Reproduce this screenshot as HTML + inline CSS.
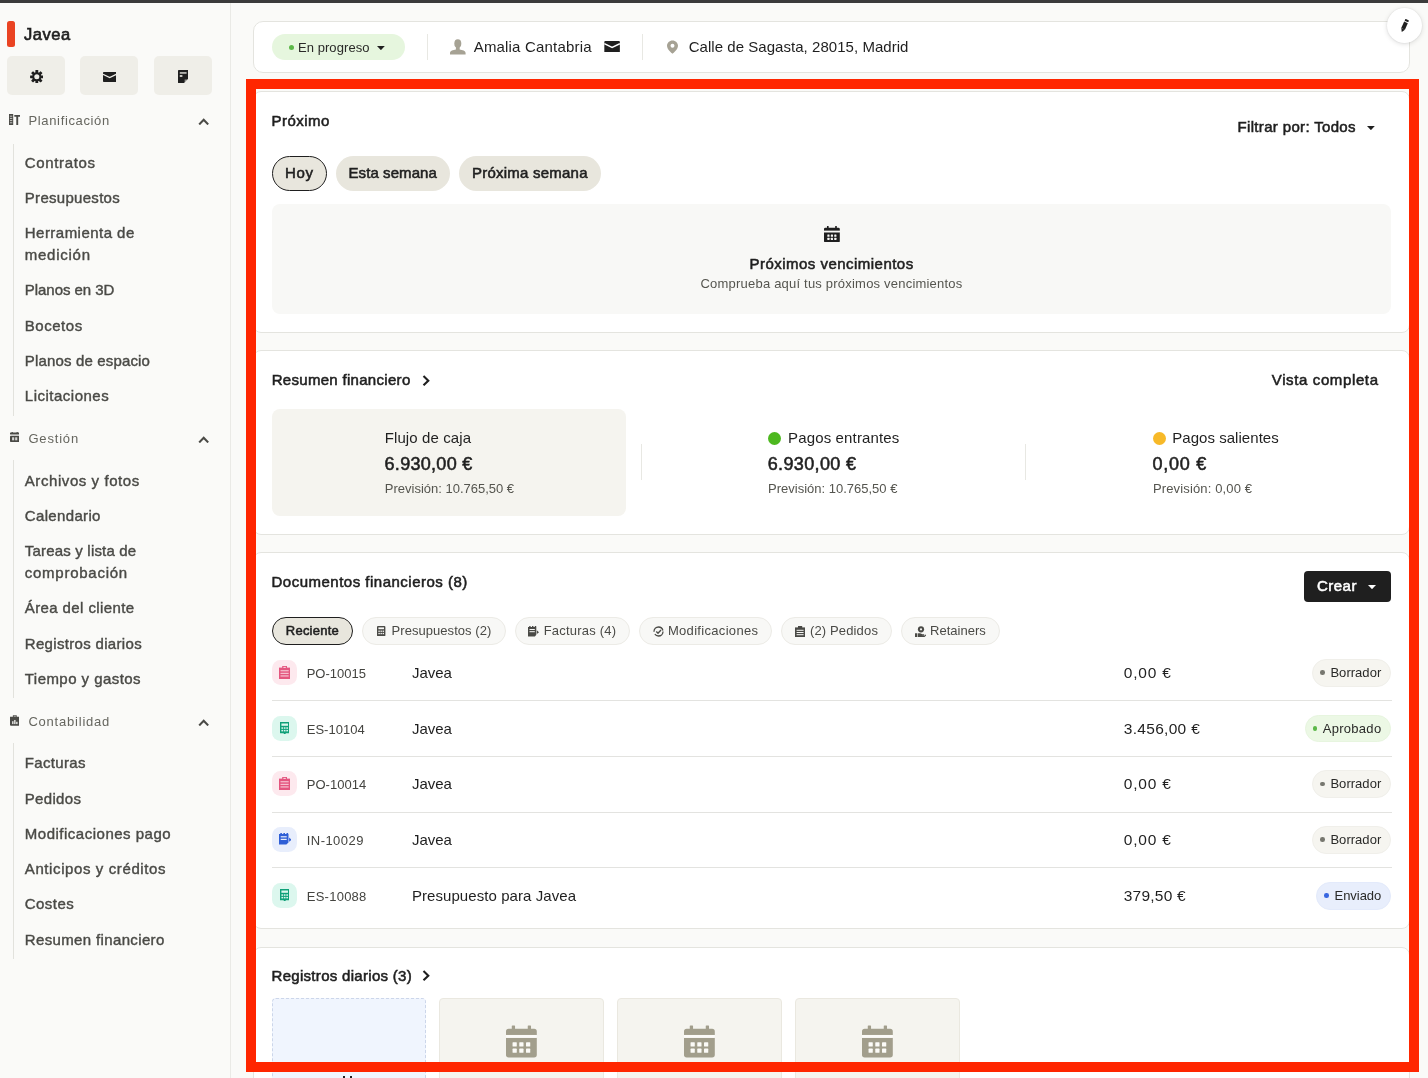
<!DOCTYPE html>
<html lang="es">
<head>
<meta charset="utf-8">
<title>Javea</title>
<style>
*{box-sizing:border-box;margin:0;padding:0}
html,body{width:1428px;height:1078px;overflow:hidden;background:#fafaf8;font-family:"Liberation Sans",sans-serif;color:#1f1f1f}
div,svg,i,span{position:absolute;display:block}
.t{white-space:nowrap}
.card{left:253px;width:1157px;background:#fff;border:1px solid #e4e4df;border-radius:8px}
.sep{width:1px;background:#e8e8e3}
.pill{top:156px;height:35px;border-radius:18px;background:#e8e6dd}
.tab{top:617.2px;height:27.4px;border-radius:14px;background:#f8f8f6;border:1px solid #ecebe6}
.rowline{left:272px;width:1120px;height:1px;background:#e3e3e0}
.ico{left:272px;width:25px;height:25px;border-radius:8.5px}
.badge{height:27.8px;border-radius:14px}
.badge i{width:4.6px;height:4.6px;border-radius:50%}
.tile{top:998px;height:90px;background:#f5f4ef;border:1px solid #eae8e0;border-radius:4px}
.sbtn{top:56px;width:58px;height:38.5px;background:#efeee8;border-radius:5px}
.vline{left:13px;width:1px;background:#e2e2dd}
</style>
</head>
<body>
<div id="w" style="left:0;top:0;width:1428px;height:1078px;will-change:transform">
<div style="left:0;top:0;width:1428px;height:3px;background:#3b3b3b"></div>
<div style="left:0;top:3px;width:231px;height:1075px;background:#fafaf8;border-right:1px solid #eaeae6"></div>
<div style="left:7.1px;top:20.8px;width:8px;height:26px;border-radius:2.5px;background:#ea4322"></div>
<div class="t" style="left:24.01px;top:24px;font-size:16.5px;line-height:20px;color:#1f1f1f;letter-spacing:0.553px;-webkit-text-stroke:0.65px #1f1f1f;">Javea</div>
<div class="sbtn" style="left:7px"></div>
<div class="sbtn" style="left:80.3px"></div>
<div class="sbtn" style="left:154px"></div>
<svg style="left:29.8px;top:69.7px" width="13.6" height="13.6" viewBox="-7 -7 14 14"><g fill="#1f1f1f"><circle r="4.7"/><rect x="-1.45" y="-6.9" width="2.9" height="13.8" rx=".5"/><rect x="-1.45" y="-6.9" width="2.9" height="13.8" rx=".5" transform="rotate(45)"/><rect x="-1.45" y="-6.9" width="2.9" height="13.8" rx=".5" transform="rotate(90)"/><rect x="-1.45" y="-6.9" width="2.9" height="13.8" rx=".5" transform="rotate(135)"/></g><circle r="2.6" fill="#efeee8"/></svg>
<svg style="left:102.9px;top:71.6px" width="13.4" height="10" viewBox="0 0 13.4 10"><rect width="13.4" height="10" rx=".8" fill="#1f1f1f"/><path d="M0 2.3 L6.7 5.6 L13.4 2.3" fill="none" stroke="#efeee8" stroke-width="1.25"/></svg>
<svg style="left:177.7px;top:69.7px" width="10.4" height="13.2" viewBox="0 0 10.4 13.2"><path d="M.8 0h8.8a.8.8 0 0 1 .8.8V8.6L5.9 13.2H.8a.8.8 0 0 1-.8-.8V.8A.8.8 0 0 1 .8 0z" fill="#1f1f1f"/><rect x="1.8" y="2.3" width="6.8" height="1.3" fill="#efeee8"/><rect x="1.8" y="5.2" width="2.6" height="1.6" fill="#efeee8"/><path d="M6.6 13V9.6h3.6z" fill="#efeee8" opacity=".55"/></svg>
<svg style="left:8.7px;top:114.2px" width="11.2" height="11" viewBox="0 0 11.2 11"><path d="M0 0h4.2v11H0z" fill="#4a4a46"/><path d="M.9 2.2h2.4M.9 4.4h2.4M.9 6.6h2.4M.9 8.8h2.4" stroke="#fafaf8" stroke-width=".7"/><path d="M5.3 .9h5.9v1.9H5.3z M7.3 2.8h1.9V11H7.3z" fill="#4a4a46"/></svg>
<div class="t" style="left:28.52px;top:113px;font-size:13px;line-height:16px;color:#66665f;letter-spacing:0.644px;">Planificación</div>
<svg style="left:197.6px;top:117.8px" width="11.4" height="7.6" viewBox="0 0 11.4 7.6"><path d="M1.2 6.4 L5.7 1.8 L10.2 6.4" fill="none" stroke="#4a4a46" stroke-width="2.1"/></svg>
<svg style="left:9.7px;top:432.100px" width="9.400" height="10" viewBox="0 0 9.400 10"><g fill="#4a4a46"><rect x="1.600" y="0" width="1.200" height="1.400"/><rect x="6.600" y="0" width="1.200" height="1.400"/><rect x="0" y=".5" width="9.400" height="2.100" rx=".7"/><rect x="0" y="3.700" width="9.400" height="6.300" rx=".7"/></g><g fill="#fafaf8" opacity=".8"><rect x="2.100" y="5.300" width="2.100" height="3"/><rect x="5.200" y="5.300" width="2.100" height="3"/></g></svg>
<div class="t" style="left:28.42px;top:431px;font-size:13px;line-height:16px;color:#66665f;letter-spacing:0.821px;">Gestión</div>
<svg style="left:197.6px;top:435.8px" width="11.4" height="7.6" viewBox="0 0 11.4 7.6"><path d="M1.2 6.4 L5.7 1.8 L10.2 6.4" fill="none" stroke="#4a4a46" stroke-width="2.1"/></svg>
<svg style="left:9.800px;top:714.900px" width="9.600" height="10.900" viewBox="0 0 10 11"><path d="M0 1.600h10V10a1 1 0 0 1-1 1H1a1 1 0 0 1-1-1z M3 0h4v2H3z" fill="#4a4a46"/><rect x="3.900" y=".7" width="2.200" height=".8" fill="#fafaf8" opacity=".7"/><rect x="2.300" y="6.300" width="1.300" height="3" fill="#fafaf8"/><rect x="4.400" y="5" width="1.300" height="4.300" fill="#fafaf8"/><rect x="6.500" y="6.900" width="1.300" height="2.400" fill="#fafaf8"/></svg>
<div class="t" style="left:28.42px;top:714px;font-size:13px;line-height:16px;color:#66665f;letter-spacing:0.788px;">Contabilidad</div>
<svg style="left:197.6px;top:718.6px" width="11.4" height="7.6" viewBox="0 0 11.4 7.6"><path d="M1.2 6.4 L5.7 1.8 L10.2 6.4" fill="none" stroke="#4a4a46" stroke-width="2.1"/></svg>
<div class="vline" style="top:144px;height:271.5px"></div>
<div class="vline" style="top:460px;height:238px"></div>
<div class="vline" style="top:743px;height:216px"></div>
<div class="t" style="left:24.80px;top:152px;font-size:15px;line-height:22px;color:#4a4a46;letter-spacing:0.655px;-webkit-text-stroke:0.4px #4a4a46;">Contratos</div>
<div class="t" style="left:24.80px;top:187px;font-size:15px;line-height:22px;color:#4a4a46;letter-spacing:0.294px;-webkit-text-stroke:0.4px #4a4a46;">Presupuestos</div>
<div class="t" style="left:24.80px;top:222px;font-size:15px;line-height:22px;color:#4a4a46;letter-spacing:0.468px;-webkit-text-stroke:0.4px #4a4a46;">Herramienta de</div>
<div class="t" style="left:24.80px;top:244px;font-size:15px;line-height:22px;color:#4a4a46;letter-spacing:0.743px;-webkit-text-stroke:0.4px #4a4a46;">medición</div>
<div class="t" style="left:24.80px;top:279px;font-size:15px;line-height:22px;color:#4a4a46;letter-spacing:-0.040px;-webkit-text-stroke:0.4px #4a4a46;">Planos en 3D</div>
<div class="t" style="left:24.80px;top:315px;font-size:15px;line-height:22px;color:#4a4a46;letter-spacing:0.523px;-webkit-text-stroke:0.4px #4a4a46;">Bocetos</div>
<div class="t" style="left:24.80px;top:350px;font-size:15px;line-height:22px;color:#4a4a46;letter-spacing:0.158px;-webkit-text-stroke:0.4px #4a4a46;">Planos de espacio</div>
<div class="t" style="left:24.80px;top:385px;font-size:15px;line-height:22px;color:#4a4a46;letter-spacing:0.498px;-webkit-text-stroke:0.4px #4a4a46;">Licitaciones</div>
<div class="t" style="left:24.80px;top:470px;font-size:15px;line-height:22px;color:#4a4a46;letter-spacing:0.570px;-webkit-text-stroke:0.4px #4a4a46;">Archivos y fotos</div>
<div class="t" style="left:24.80px;top:505px;font-size:15px;line-height:22px;color:#4a4a46;letter-spacing:0.342px;-webkit-text-stroke:0.4px #4a4a46;">Calendario</div>
<div class="t" style="left:24.80px;top:540px;font-size:15px;line-height:22px;color:#4a4a46;letter-spacing:0.189px;-webkit-text-stroke:0.4px #4a4a46;">Tareas y lista de</div>
<div class="t" style="left:24.80px;top:562px;font-size:15px;line-height:22px;color:#4a4a46;letter-spacing:0.737px;-webkit-text-stroke:0.4px #4a4a46;">comprobación</div>
<div class="t" style="left:24.80px;top:597px;font-size:15px;line-height:22px;color:#4a4a46;letter-spacing:0.394px;-webkit-text-stroke:0.4px #4a4a46;">Área del cliente</div>
<div class="t" style="left:24.80px;top:633px;font-size:15px;line-height:22px;color:#4a4a46;letter-spacing:0.321px;-webkit-text-stroke:0.4px #4a4a46;">Registros diarios</div>
<div class="t" style="left:24.80px;top:668px;font-size:15px;line-height:22px;color:#4a4a46;letter-spacing:0.449px;-webkit-text-stroke:0.4px #4a4a46;">Tiempo y gastos</div>
<div class="t" style="left:24.80px;top:752px;font-size:15px;line-height:22px;color:#4a4a46;letter-spacing:0.326px;-webkit-text-stroke:0.4px #4a4a46;">Facturas</div>
<div class="t" style="left:24.80px;top:788px;font-size:15px;line-height:22px;color:#4a4a46;letter-spacing:0.322px;-webkit-text-stroke:0.4px #4a4a46;">Pedidos</div>
<div class="t" style="left:24.80px;top:823px;font-size:15px;line-height:22px;color:#4a4a46;letter-spacing:0.505px;-webkit-text-stroke:0.4px #4a4a46;">Modificaciones pago</div>
<div class="t" style="left:24.80px;top:858px;font-size:15px;line-height:22px;color:#4a4a46;letter-spacing:0.604px;-webkit-text-stroke:0.4px #4a4a46;">Anticipos y créditos</div>
<div class="t" style="left:24.80px;top:893px;font-size:15px;line-height:22px;color:#4a4a46;letter-spacing:0.439px;-webkit-text-stroke:0.4px #4a4a46;">Costes</div>
<div class="t" style="left:24.80px;top:929px;font-size:15px;line-height:22px;color:#4a4a46;letter-spacing:0.360px;-webkit-text-stroke:0.4px #4a4a46;">Resumen financiero</div>
<div style="left:253px;top:21px;width:1157px;height:52px;background:#fff;border:1px solid #e4e4df;border-radius:10px"></div>
<div style="left:272px;top:34.3px;width:133px;height:26.2px;border-radius:13.1px;background:#e6f6de"></div>
<div style="left:289px;top:45px;width:5px;height:5px;border-radius:50%;background:#5cb848"></div>
<div class="t" style="left:297.92px;top:40px;font-size:13px;line-height:16px;color:#2a2a28;letter-spacing:0.078px;">En progreso</div>
<svg style="left:376.8px;top:45.9px" width="7.8" height="4.2" viewBox="0 0 8 4.2"><path d="M0 0h8L4 4.2z" fill="#1f1f1f"/></svg>
<div class="sep" style="left:427px;top:34px;height:26px"></div>
<div class="sep" style="left:642px;top:34px;height:26px"></div>
<svg style="left:450px;top:39.4px" width="15.6" height="15.6" viewBox="0 0 15.6 15.6"><g fill="#a6a294"><ellipse cx="7.8" cy="4.6" rx="3.5" ry="4.4"/><path d="M5.9 7.5h3.8v3.1c2.6.5 5.9 1.300 5.9 3.4v1.600H0v-1.600c0-2.100 3.300-2.900 5.900-3.400z"/></g></svg>
<div class="t" style="left:473.70px;top:37px;font-size:15px;line-height:20px;color:#1f1f1f;letter-spacing:0.183px;">Amalia Cantabria</div>
<svg style="left:603.8px;top:40.9px" width="16.2" height="11.6" viewBox="0 0 13.4 10"><rect width="13.4" height="10" rx=".8" fill="#1f1f1f"/><path d="M0 2.3 L6.7 5.6 L13.4 2.3" fill="none" stroke="#ffffff" stroke-width="1.25"/></svg>
<svg style="left:667.4px;top:39.6px" width="11" height="14.2" viewBox="0 0 11.8 14.4"><path d="M5.9 0C2.600 0 0 2.600 0 5.800c0 3.900 4.800 7.600 5.900 8.600 1.100-1 5.900-4.700 5.900-8.600C11.800 2.600 9.200 0 5.900 0z" fill="#a6a294"/><circle cx="5.9" cy="5.700" r="2.100" fill="#fff"/></svg>
<div class="t" style="left:688.70px;top:37px;font-size:15px;line-height:20px;color:#1f1f1f;letter-spacing:0.043px;">Calle de Sagasta, 28015, Madrid</div>
<div style="left:1386.8px;top:8.2px;width:35px;height:35px;border-radius:50%;background:#fff;box-shadow:0 1px 5px rgba(0,0,0,.13),0 0 2px rgba(0,0,0,.10);z-index:60"></div>
<svg style="left:1398.5px;top:18.5px;z-index:61" width="11" height="13.5" viewBox="0 0 11 13.5"><g transform="rotate(24 5.5 6.75)" fill="#1f1f1f"><rect x="3.5" y="3.1" width="4" height="7.1"/><path d="M3.5 10.200h4L5.500 13.500z"/><rect x="3.500" y=".1" width="4" height="2" rx=".6"/></g></svg>
<div class="card" style="top:91px;height:242px"></div>
<div class="card" style="top:350px;height:185px"></div>
<div class="card" style="top:552px;height:377px"></div>
<div class="card" style="top:947px;height:160px"></div>
<div class="t" style="left:271.50px;top:111px;font-size:15px;line-height:20px;color:#1f1f1f;letter-spacing:0.475px;-webkit-text-stroke:0.55px #1f1f1f;">Próximo</div>
<div class="t" style="left:1237.50px;top:117px;font-size:15px;line-height:20px;color:#1f1f1f;letter-spacing:0.339px;-webkit-text-stroke:0.55px #1f1f1f;">Filtrar por: Todos</div>
<svg style="left:1367.4px;top:125.6px" width="7.8" height="4.2" viewBox="0 0 8 4.2"><path d="M0 0h8L4 4.2z" fill="#1f1f1f"/></svg>
<div class="pill" style="left:272px;width:55px;border:1.3px solid #1f1f1f"></div>
<div class="pill" style="left:336px;width:114px"></div>
<div class="pill" style="left:459px;width:142px"></div>
<div class="t" style="left:285.10px;top:163px;font-size:15px;line-height:20px;color:#1f1f1f;letter-spacing:0.650px;-webkit-text-stroke:0.55px #1f1f1f;">Hoy</div>
<div class="t" style="left:348.50px;top:163px;font-size:15px;line-height:20px;color:#1f1f1f;letter-spacing:0.081px;-webkit-text-stroke:0.55px #1f1f1f;">Esta semana</div>
<div class="t" style="left:472.00px;top:163px;font-size:15px;line-height:20px;color:#1f1f1f;letter-spacing:0.226px;-webkit-text-stroke:0.55px #1f1f1f;">Próxima semana</div>
<div style="left:272px;top:204px;width:1119px;height:109.5px;border-radius:8px;background:#f8f8f6"></div>
<svg style="left:824px;top:226px" width="15.8" height="16.4" viewBox="0 0 16 16.6"><g fill="#1f1f1f"><rect x="3" y="0" width="1.700" height="3" rx=".3"/><rect x="11.300" y="0" width="1.700" height="3" rx=".3"/><path d="M1.400 1.700h13.200a1.400 1.400 0 0 1 1.400 1.400v1.800H0V3.100a1.400 1.400 0 0 1 1.400-1.400z"/><path d="M0 6.400h16v8.800a1.400 1.400 0 0 1-1.400 1.400H1.400A1.400 1.400 0 0 1 0 15.200z"/></g><g fill="#f8f8f6"><rect x="0" y="4.900" width="16" height="1.500"/><rect x="3.400" y="8.700" width="2.200" height="2.200" rx=".3"/><rect x="6.900" y="8.700" width="2.200" height="2.200" rx=".3"/><rect x="10.400" y="8.700" width="2.200" height="2.200" rx=".3"/><rect x="3.400" y="12" width="2.200" height="2.200" rx=".3"/><rect x="6.900" y="12" width="2.200" height="2.200" rx=".3"/><rect x="10.400" y="12" width="2.200" height="2.200" rx=".3"/></g></svg>
<div class="t" style="left:749.50px;top:254px;font-size:15px;line-height:20px;color:#1f1f1f;letter-spacing:0.472px;-webkit-text-stroke:0.55px #1f1f1f;">Próximos vencimientos</div>
<div class="t" style="left:700.52px;top:276px;font-size:13px;line-height:16px;color:#55554f;letter-spacing:0.208px;">Comprueba aquí tus próximos vencimientos</div>
<div class="t" style="left:271.70px;top:370px;font-size:15px;line-height:20px;color:#1f1f1f;letter-spacing:0.303px;-webkit-text-stroke:0.55px #1f1f1f;">Resumen financiero</div>
<svg style="left:422px;top:374.6px" width="8.4" height="11.4" viewBox="0 0 8.4 11.4"><path d="M1.500 1.100 L6.300 5.700 L1.500 10.300" fill="none" stroke="#1f1f1f" stroke-width="2.100"/></svg>
<div class="t" style="left:1271.80px;top:370px;font-size:15px;line-height:20px;color:#1f1f1f;letter-spacing:0.622px;-webkit-text-stroke:0.55px #1f1f1f;">Vista completa</div>
<div style="left:272px;top:409.2px;width:354.4px;height:107px;border-radius:8px;background:#f5f4ef"></div>
<div class="t" style="left:384.70px;top:428px;font-size:15px;line-height:20px;color:#1f1f1f;letter-spacing:0.108px;">Flujo de caja</div>
<div class="t" style="left:384.52px;top:454px;font-size:18px;line-height:20px;color:#1f1f1f;letter-spacing:0.301px;-webkit-text-stroke:0.55px #1f1f1f;">6.930,00 €</div>
<div class="t" style="left:384.82px;top:481px;font-size:13px;line-height:16px;color:#55554f;letter-spacing:-0.006px;">Previsión: 10.765,50 €</div>
<div class="sep" style="left:641px;top:444px;height:36px"></div>
<div class="sep" style="left:1025px;top:444px;height:36px"></div>
<div style="left:767.8px;top:431.8px;width:13.4px;height:13.4px;border-radius:50%;background:#4db81f"></div>
<div class="t" style="left:788.00px;top:428px;font-size:15px;line-height:20px;color:#1f1f1f;letter-spacing:0.149px;">Pagos entrantes</div>
<div class="t" style="left:767.72px;top:454px;font-size:18px;line-height:20px;color:#1f1f1f;letter-spacing:0.364px;-webkit-text-stroke:0.55px #1f1f1f;">6.930,00 €</div>
<div class="t" style="left:768.02px;top:481px;font-size:13px;line-height:16px;color:#55554f;letter-spacing:-0.001px;">Previsión: 10.765,50 €</div>
<div style="left:1153px;top:431.8px;width:13.4px;height:13.4px;border-radius:50%;background:#f7b928"></div>
<div class="t" style="left:1172.20px;top:428px;font-size:15px;line-height:20px;color:#1f1f1f;letter-spacing:0.048px;">Pagos salientes</div>
<div class="t" style="left:1152.62px;top:454px;font-size:18px;line-height:20px;color:#1f1f1f;letter-spacing:0.726px;-webkit-text-stroke:0.55px #1f1f1f;">0,00 €</div>
<div class="t" style="left:1152.92px;top:481px;font-size:13px;line-height:16px;color:#55554f;letter-spacing:0.146px;">Previsión: 0,00 €</div>
<div class="t" style="left:271.50px;top:572px;font-size:15px;line-height:20px;color:#1f1f1f;letter-spacing:0.497px;-webkit-text-stroke:0.55px #1f1f1f;">Documentos financieros (8)</div>
<div style="left:1304px;top:571.2px;width:87px;height:30.4px;border-radius:4px;background:#1f1f1f"></div>
<div class="t" style="left:1317.10px;top:576px;font-size:15px;line-height:20px;color:#fff;letter-spacing:0.443px;-webkit-text-stroke:0.55px #fff;">Crear</div>
<svg style="left:1367.6px;top:585.2px" width="8" height="4.2" viewBox="0 0 8 4.2"><path d="M0 0h8L4 4.2z" fill="#fff"/></svg>
<div class="tab" style="left:272px;width:81px;background:#e8e6dd;border:1.3px solid #1f1f1f"></div>
<div class="t" style="left:285.82px;top:623px;font-size:13px;line-height:16px;color:#1f1f1f;letter-spacing:0.231px;-webkit-text-stroke:0.55px #1f1f1f;">Reciente</div>
<div class="tab" style="left:362.2px;width:143.8px"></div>
<div class="t" style="left:391.52px;top:623px;font-size:13px;line-height:16px;color:#4a4a46;letter-spacing:0.055px;">Presupuestos (2)</div>
<div class="tab" style="left:515.2px;width:114.8px"></div>
<div class="t" style="left:543.72px;top:623px;font-size:13px;line-height:16px;color:#4a4a46;letter-spacing:0.206px;">Facturas (4)</div>
<div class="tab" style="left:639.4px;width:132.6px"></div>
<div class="t" style="left:667.92px;top:623px;font-size:13px;line-height:16px;color:#4a4a46;letter-spacing:0.315px;">Modificaciones</div>
<div class="tab" style="left:781px;width:111.2px"></div>
<div class="t" style="left:809.92px;top:623px;font-size:13px;line-height:16px;color:#4a4a46;letter-spacing:0.149px;">(2) Pedidos</div>
<div class="tab" style="left:901.2px;width:98.5px"></div>
<div class="t" style="left:930.12px;top:623px;font-size:13px;line-height:16px;color:#4a4a46;letter-spacing:0.000px;">Retainers</div>
<svg style="left:377.2px;top:626.2px" width="8.4" height="10.2" viewBox="0 0 8.4 10.2"><rect width="8.4" height="10.2" rx="1" fill="#4a4a46"/><rect x="1.4" y="1.4" width="5.6" height="1.8" fill="#f8f8f6"/><g fill="#f8f8f6"><rect x="1.4" y="4.6" width="1.4" height="1.3"/><rect x="3.5" y="4.600" width="1.400" height="1.300"/><rect x="5.600" y="4.600" width="1.400" height="1.300"/><rect x="1.400" y="6.900" width="1.400" height="1.300"/><rect x="3.500" y="6.900" width="1.400" height="1.300"/><rect x="5.600" y="6.900" width="1.400" height="1.300"/></g></svg>
<svg style="left:528.4px;top:626px" width="11" height="10.6" viewBox="0 0 11 10.6"><path d="M0 1h1.200V0h1.400v1h1.400V0h1.400v1h1.400V0h1.400v1H8.300v7.800L6.900 10.600H0z" fill="#4a4a46"/><rect x="1.500" y="3" width="5.300" height="1" fill="#f8f8f6"/><rect x="1.500" y="5.200" width="5.300" height="1" fill="#f8f8f6"/><path d="M8.800 4.300l2.200 1.900-2.200 1.900z" fill="#4a4a46"/></svg>
<svg style="left:653px;top:626px" width="11" height="11" viewBox="0 0 11 11"><circle cx="5.500" cy="5.500" r="4.500" fill="none" stroke="#4a4a46" stroke-width="1.300" stroke-dasharray="11 2.500 13 2"/><path d="M3.300 5.600l1.700 1.700 3-3.200" fill="none" stroke="#4a4a46" stroke-width="1.400"/></svg>
<svg style="left:795px;top:625.6px" width="10.200" height="11.400" viewBox="0 0 10.200 11.400"><path d="M0 1.400h10.200v10H0z" fill="#4a4a46"/><rect x="3" y="0" width="4.200" height="2.400" fill="#4a4a46"/><g fill="#f8f8f6"><rect x="1.600" y="3.800" width="7" height="1"/><rect x="1.600" y="6" width="7" height="1"/><rect x="1.600" y="8.200" width="7" height="1"/></g></svg>
<svg style="left:915px;top:625.6px" width="11" height="11.400" viewBox="0 0 11 11.400"><circle cx="6" cy="3.300" r="3.100" fill="#4a4a46"/><circle cx="6" cy="3.300" r="1.100" fill="#f8f8f6"/><path d="M0 7.200h2.200v4.200H0z M2.800 7.600c1.800-.8 3.200-.2 4.400.6h1.600c.7 0 .7 1.100 0 1.100H6l3.800.2 1.200-1.200v1.400l-2 1.700H2.800z" fill="#4a4a46"/></svg>
<div class="ico" style="top:660.0px;background:#fde9ee"></div>
<svg style="left:279px;top:665.8px" width="11.2" height="13" viewBox="0 0 11.2 13"><path d="M0 1.600h11.200V13H0z" fill="#e4567f"/><rect x="3.200" y="0" width="4.800" height="2.600" fill="#e4567f"/><rect x="4.400" y=".9" width="2.400" height=".9" fill="#fde9ee"/><g fill="#fde9ee" opacity=".8"><rect x="1.500" y="4.200" width="8.200" height="1.100"/><rect x="1.500" y="6.800" width="8.200" height="1.100"/><rect x="1.500" y="9.400" width="8.200" height="1.100"/></g></svg>
<div class="t" style="left:306.72px;top:666px;font-size:13px;line-height:16px;color:#444440;letter-spacing:-0.016px;">PO-10015</div>
<div class="t" style="left:411.90px;top:663px;font-size:15px;line-height:20px;color:#1f1f1f;letter-spacing:-0.006px;">Javea</div>
<div class="t" style="left:1123.77px;top:663px;font-size:15.5px;line-height:20px;color:#1f1f1f;letter-spacing:0.826px;">0,00 €</div>
<div class="badge" style="left:1312px;top:659.0px;width:79px;background:#f6f5f0;border:1px solid #f0efea"><i style="left:7px;top:10.300px;background:#77776f"></i></div>
<div class="t" style="left:1330.42px;top:665px;font-size:13px;line-height:16px;color:#2a2a28;letter-spacing:0.035px;">Borrador</div>
<div class="ico" style="top:715.7px;background:#dcf7ee"></div>
<svg style="left:280px;top:721.7px" width="9.400" height="12.600" viewBox="0 0 9.400 12.600"><path d="M0 0h9.400v11.300H6l-1.300 1.300L3.400 11.300H0z" fill="#10a079"/><g fill="#dcf7ee"><rect x="1.400" y="1.500" width="6.600" height="2.300"/><rect x="1.400" y="5.300" width="1.700" height="1.500"/><rect x="3.850" y="5.300" width="1.700" height="1.500"/><rect x="6.300" y="5.300" width="1.700" height="1.500"/><rect x="1.400" y="7.900" width="1.700" height="1.500"/><rect x="3.850" y="7.900" width="1.700" height="1.500"/><rect x="6.300" y="7.900" width="1.700" height="1.500"/></g></svg>
<div class="t" style="left:306.72px;top:722px;font-size:13px;line-height:16px;color:#444440;letter-spacing:0.029px;">ES-10104</div>
<div class="t" style="left:411.90px;top:719px;font-size:15px;line-height:20px;color:#1f1f1f;letter-spacing:-0.006px;">Javea</div>
<div class="t" style="left:1123.77px;top:719px;font-size:15.5px;line-height:20px;color:#1f1f1f;letter-spacing:0.303px;">3.456,00 €</div>
<div class="badge" style="left:1304.5px;top:714.7px;width:86.500px;background:#ecf8e5;border:1px solid #e7f5df"><i style="left:7.200px;top:10.300px;background:#5cb848"></i></div>
<div class="t" style="left:1322.72px;top:721px;font-size:13px;line-height:16px;color:#2a2a28;letter-spacing:0.288px;">Aprobado</div>
<div class="ico" style="top:771.4px;background:#fde9ee"></div>
<svg style="left:279px;top:777.1999999999999px" width="11.2" height="13" viewBox="0 0 11.2 13"><path d="M0 1.600h11.200V13H0z" fill="#e4567f"/><rect x="3.200" y="0" width="4.800" height="2.600" fill="#e4567f"/><rect x="4.400" y=".9" width="2.400" height=".9" fill="#fde9ee"/><g fill="#fde9ee" opacity=".8"><rect x="1.500" y="4.200" width="8.200" height="1.100"/><rect x="1.500" y="6.800" width="8.200" height="1.100"/><rect x="1.500" y="9.400" width="8.200" height="1.100"/></g></svg>
<div class="t" style="left:306.72px;top:777px;font-size:13px;line-height:16px;color:#444440;letter-spacing:0.024px;">PO-10014</div>
<div class="t" style="left:411.90px;top:774px;font-size:15px;line-height:20px;color:#1f1f1f;letter-spacing:-0.006px;">Javea</div>
<div class="t" style="left:1123.77px;top:774px;font-size:15.5px;line-height:20px;color:#1f1f1f;letter-spacing:0.826px;">0,00 €</div>
<div class="badge" style="left:1312px;top:770.4px;width:79px;background:#f6f5f0;border:1px solid #f0efea"><i style="left:7px;top:10.300px;background:#77776f"></i></div>
<div class="t" style="left:1330.42px;top:776px;font-size:13px;line-height:16px;color:#2a2a28;letter-spacing:0.035px;">Borrador</div>
<div class="ico" style="top:827.1px;background:#e8eefc"></div>
<svg style="left:278.600px;top:833.3000000000001px" width="12.600" height="11.600" viewBox="0 0 12.600 11.600"><path d="M0 1h1.300V0h1.600v1h1.500V0h1.600v1h1.500V0h1.600v1h.4v8.400L7.400 11.600H0z" fill="#2f5fd6"/><g fill="#e8eefc"><rect x="1.700" y="3.200" width="6" height="1.200"/><rect x="1.700" y="5.800" width="6" height="1.200"/></g><path d="M10.100 4.600l2.500 2.100-2.500 2.100z" fill="#2f5fd6"/></svg>
<div class="t" style="left:306.72px;top:833px;font-size:13px;line-height:16px;color:#444440;letter-spacing:0.461px;">IN-10029</div>
<div class="t" style="left:411.90px;top:830px;font-size:15px;line-height:20px;color:#1f1f1f;letter-spacing:-0.006px;">Javea</div>
<div class="t" style="left:1123.77px;top:830px;font-size:15.5px;line-height:20px;color:#1f1f1f;letter-spacing:0.826px;">0,00 €</div>
<div class="badge" style="left:1312px;top:826.1px;width:79px;background:#f6f5f0;border:1px solid #f0efea"><i style="left:7px;top:10.300px;background:#77776f"></i></div>
<div class="t" style="left:1330.42px;top:832px;font-size:13px;line-height:16px;color:#2a2a28;letter-spacing:0.035px;">Borrador</div>
<div class="ico" style="top:882.8000000000001px;background:#dcf7ee"></div>
<svg style="left:280px;top:888.8000000000001px" width="9.400" height="12.600" viewBox="0 0 9.400 12.600"><path d="M0 0h9.400v11.300H6l-1.300 1.300L3.400 11.300H0z" fill="#10a079"/><g fill="#dcf7ee"><rect x="1.400" y="1.500" width="6.600" height="2.300"/><rect x="1.400" y="5.300" width="1.700" height="1.500"/><rect x="3.850" y="5.300" width="1.700" height="1.500"/><rect x="6.300" y="5.300" width="1.700" height="1.500"/><rect x="1.400" y="7.900" width="1.700" height="1.500"/><rect x="3.850" y="7.900" width="1.700" height="1.500"/><rect x="6.300" y="7.900" width="1.700" height="1.500"/></g></svg>
<div class="t" style="left:306.72px;top:889px;font-size:13px;line-height:16px;color:#444440;letter-spacing:0.256px;">ES-10088</div>
<div class="t" style="left:411.90px;top:886px;font-size:15px;line-height:20px;color:#1f1f1f;letter-spacing:0.074px;">Presupuesto para Javea</div>
<div class="t" style="left:1123.77px;top:886px;font-size:15.5px;line-height:20px;color:#1f1f1f;letter-spacing:0.227px;">379,50 €</div>
<div class="badge" style="left:1316.3px;top:881.8000000000001px;width:74.700px;background:#e8eefc;border:1px solid #e3eafb"><i style="left:7.200px;top:10.300px;background:#3866e0"></i></div>
<div class="t" style="left:1334.52px;top:888px;font-size:13px;line-height:16px;color:#2a2a28;letter-spacing:-0.037px;">Enviado</div>
<div class="rowline" style="top:700px"></div>
<div class="rowline" style="top:756px"></div>
<div class="rowline" style="top:811.5px"></div>
<div class="rowline" style="top:867px"></div>
<div class="t" style="left:271.50px;top:966px;font-size:15px;line-height:20px;color:#1f1f1f;letter-spacing:0.302px;-webkit-text-stroke:0.55px #1f1f1f;">Registros diarios (3)</div>
<svg style="left:422.2px;top:970.4px" width="8.4" height="11.4" viewBox="0 0 8.4 11.4"><path d="M1.500 1.100 L6.300 5.700 L1.500 10.300" fill="none" stroke="#1f1f1f" stroke-width="2.100"/></svg>
<div class="tile" style="left:272px;width:153.800px;background:#f0f5fe;border:1px dashed #ccd6ea"></div>
<div class="tile" style="left:439.2px;width:165px"></div>
<svg style="left:506.2px;top:1025px" width="30.8" height="33" viewBox="0 0 16 16.6"><g fill="#a29e8c"><rect x="3" y="0" width="1.700" height="3" rx=".3"/><rect x="11.300" y="0" width="1.700" height="3" rx=".3"/><path d="M1.400 1.700h13.200a1.400 1.400 0 0 1 1.400 1.400v1.800H0V3.100a1.400 1.400 0 0 1 1.400-1.400z"/><path d="M0 6.400h16v8.800a1.400 1.400 0 0 1-1.400 1.400H1.400A1.400 1.400 0 0 1 0 15.200z"/></g><g fill="#fcfbf8"><rect x="0" y="4.900" width="16" height="1.500"/><rect x="3.400" y="8.700" width="2.200" height="2.200" rx=".3"/><rect x="6.900" y="8.700" width="2.200" height="2.200" rx=".3"/><rect x="10.400" y="8.700" width="2.200" height="2.200" rx=".3"/><rect x="3.400" y="12" width="2.200" height="2.200" rx=".3"/><rect x="6.900" y="12" width="2.200" height="2.200" rx=".3"/><rect x="10.400" y="12" width="2.200" height="2.200" rx=".3"/></g></svg>
<div class="tile" style="left:617.2px;width:165px"></div>
<svg style="left:684.2px;top:1025px" width="30.8" height="33" viewBox="0 0 16 16.6"><g fill="#a29e8c"><rect x="3" y="0" width="1.700" height="3" rx=".3"/><rect x="11.300" y="0" width="1.700" height="3" rx=".3"/><path d="M1.400 1.700h13.200a1.400 1.400 0 0 1 1.400 1.400v1.800H0V3.100a1.400 1.400 0 0 1 1.400-1.400z"/><path d="M0 6.400h16v8.800a1.400 1.400 0 0 1-1.400 1.400H1.400A1.400 1.400 0 0 1 0 15.200z"/></g><g fill="#fcfbf8"><rect x="0" y="4.900" width="16" height="1.500"/><rect x="3.400" y="8.700" width="2.200" height="2.200" rx=".3"/><rect x="6.900" y="8.700" width="2.200" height="2.200" rx=".3"/><rect x="10.400" y="8.700" width="2.200" height="2.200" rx=".3"/><rect x="3.400" y="12" width="2.200" height="2.200" rx=".3"/><rect x="6.900" y="12" width="2.200" height="2.200" rx=".3"/><rect x="10.400" y="12" width="2.200" height="2.200" rx=".3"/></g></svg>
<div class="tile" style="left:795.2px;width:165px"></div>
<svg style="left:862.2px;top:1025px" width="30.8" height="33" viewBox="0 0 16 16.6"><g fill="#a29e8c"><rect x="3" y="0" width="1.700" height="3" rx=".3"/><rect x="11.300" y="0" width="1.700" height="3" rx=".3"/><path d="M1.400 1.700h13.200a1.400 1.400 0 0 1 1.400 1.400v1.800H0V3.100a1.400 1.400 0 0 1 1.400-1.400z"/><path d="M0 6.400h16v8.800a1.400 1.400 0 0 1-1.400 1.400H1.400A1.400 1.400 0 0 1 0 15.200z"/></g><g fill="#fcfbf8"><rect x="0" y="4.900" width="16" height="1.500"/><rect x="3.400" y="8.700" width="2.200" height="2.200" rx=".3"/><rect x="6.900" y="8.700" width="2.200" height="2.200" rx=".3"/><rect x="10.400" y="8.700" width="2.200" height="2.200" rx=".3"/><rect x="3.400" y="12" width="2.200" height="2.200" rx=".3"/><rect x="6.900" y="12" width="2.200" height="2.200" rx=".3"/><rect x="10.400" y="12" width="2.200" height="2.200" rx=".3"/></g></svg>
<div style="left:343px;top:1075.600px;width:2px;height:3px;background:#1f1f1f"></div><div style="left:350px;top:1075.600px;width:2px;height:3px;background:#1f1f1f"></div>
<div style="left:246px;top:79px;width:1173px;height:993px;border:10px solid #ff2600;z-index:50"></div>
</div>
</body>
</html>
